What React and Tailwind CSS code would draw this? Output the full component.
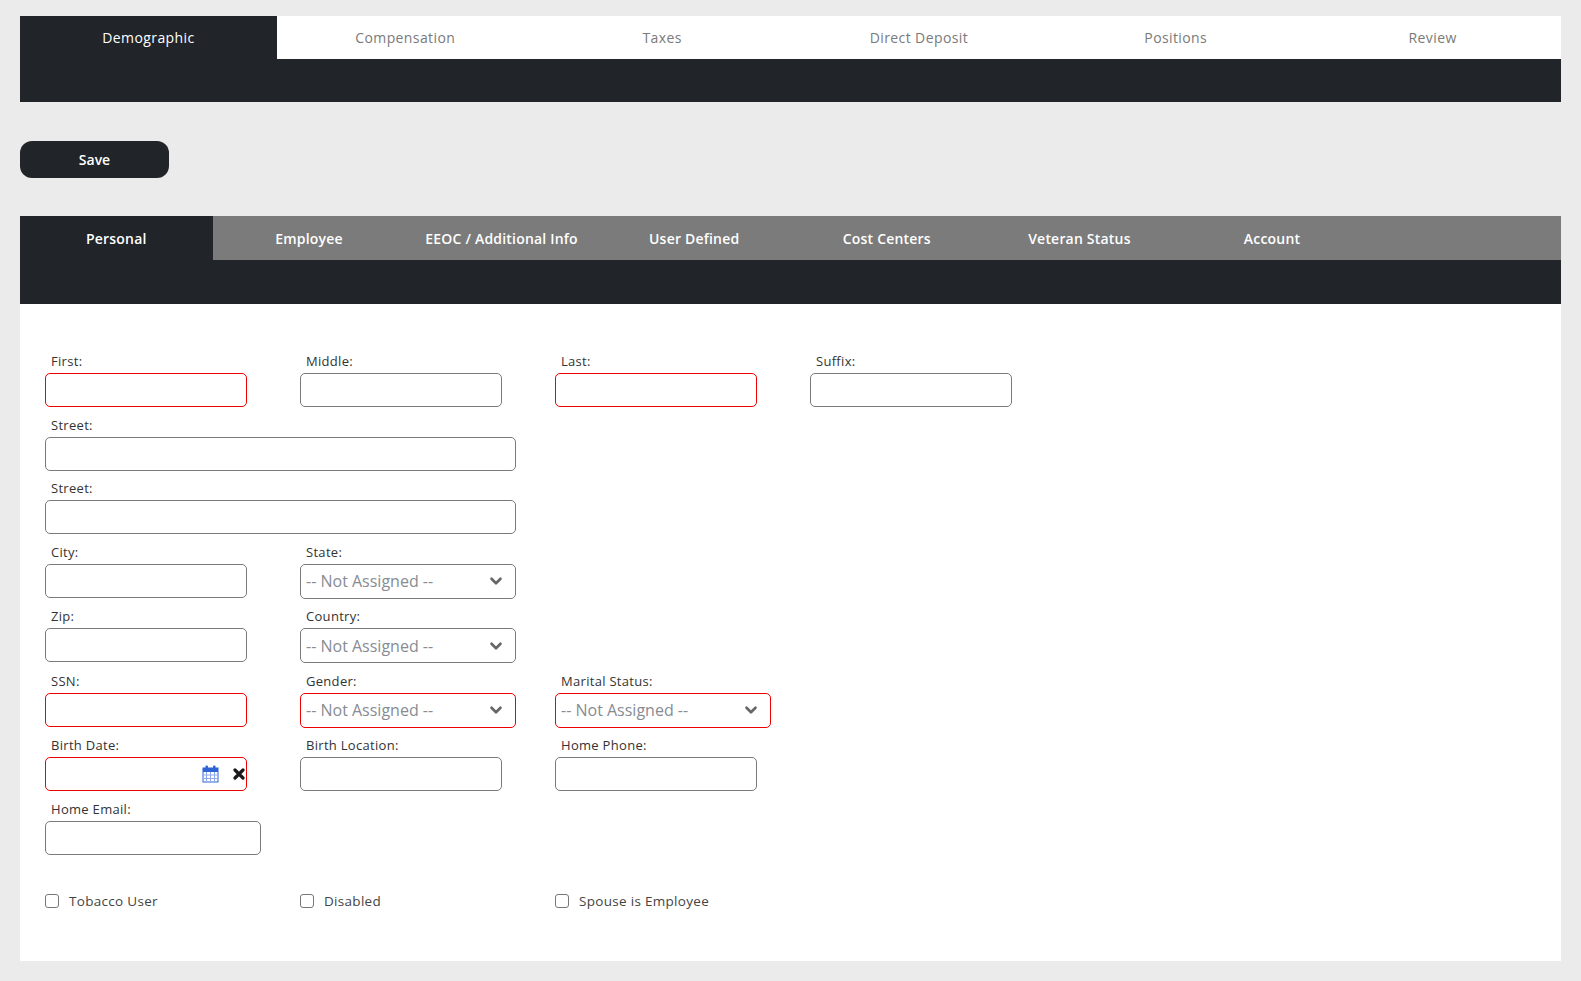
import React from "react";
import { ChevronDown } from "lucide-react";

const topTabs = ["Demographic", "Compensation", "Taxes", "Direct Deposit", "Positions", "Review"];
const subTabs = ["Personal", "Employee", "EEOC / Additional Info", "User Defined", "Cost Centers", "Veteran Status", "Account"];

const font = { fontFamily: '"Open Sans", "Liberation Sans", sans-serif' };

const Field = ({ label, invalid, width = "w-[202px]", children }) => (
	<div className="flex flex-col">
		<label className="h-[20px] leading-[20px] mb-[2px] pl-[6px] text-[13px] tracking-[0.3px] text-[#333]">
			{label}
		</label>
		{children || (
			<input
				className={`${width} h-[34px] rounded-[5px] border bg-white outline-none ${
					invalid ? "border-[#ee0000]" : "border-[#7a7a7a]"
				}`}
			/>
		)}
	</div>
);

const Select = ({ label, invalid }) => (
	<Field label={label}>
		<div
			className={`w-[216px] h-[35px] rounded-[5px] border bg-white flex items-center justify-between pl-[5px] pr-[10px] ${
				invalid ? "border-[#ee0000]" : "border-[#7a7a7a]"
			}`}>
			<span className="text-[16px] text-[#878c93]">-- Not Assigned --</span>
			<ChevronDown size={18} strokeWidth={3.5} className="text-[#666]" />
		</div>
	</Field>
);

const CalendarIcon = () => (
	<svg width="17" height="18" viewBox="0 0 17 18">
		<rect x="1" y="3" width="15" height="14" fill="#fff" stroke="#2f63d6" strokeWidth="1" />
		<rect x="1" y="3" width="15" height="4" fill="#2f63d6" />
		<rect x="3.5" y="0.5" width="2.5" height="5" rx="1" fill="#2f63d6" />
		<rect x="11" y="0.5" width="2.5" height="5" rx="1" fill="#2f63d6" />
		<path d="M4.5 7v10M8.5 7v10M12.5 7v10M1 10h15M1 13.5h15" stroke="#8fa8f0" strokeWidth="1" />
	</svg>
);

const Check = ({ label }) => (
	<label className="flex items-center gap-[10px] text-[13.5px] tracking-[0.3px] text-[#444]">
		<span className="w-[14px] h-[14px] rounded-[3px] border border-[#777] bg-white" />
		{label}
	</label>
);

export default function App() {
	return (
		<div className="min-h-screen bg-[#ebebeb] px-[20px] pt-[16px] pb-[23px]" style={font}>
			<nav className="h-[86px] bg-[#212429]">
				<div className="grid grid-cols-6 h-[43px] bg-white">
					{topTabs.map((t, i) => (
						<div
							key={t}
							className={`flex items-center justify-center text-[14px] tracking-[0.4px] ${
								i === 0 ? "bg-[#212429] text-white font-medium" : "text-[#7a7a7a]"
							}`}>
							{t}
						</div>
					))}
				</div>
			</nav>

			<div className="pt-[39px] pb-[38px]">
				<button className="w-[149px] h-[37px] rounded-[12px] bg-[#212429] text-white text-[14px] font-semibold">
					Save
				</button>
			</div>

			<div className="h-[88px] bg-[#212429]">
				<div className="grid grid-cols-8 h-[44px] bg-[#7b7b7b]">
					{subTabs.map((t, i) => (
						<div
							key={t}
							className={`flex items-center justify-center text-[14px] font-semibold tracking-[0.2px] text-white ${
								i === 0 ? "bg-[#212429]" : ""
							}`}>
							{t}
						</div>
					))}
				</div>
			</div>

			<div className="bg-white pl-[25px] pt-[47px] pb-[50px]">
				<div className="flex flex-col gap-y-[7.5px]">
					<div className="grid grid-cols-[255px_255px_255px_255px]">
						<Field label="First:" invalid />
						<Field label="Middle:" />
						<Field label="Last:" invalid />
						<Field label="Suffix:" />
					</div>
					<div className="flex">
						<Field label="Street:" width="w-[471px]" />
					</div>
					<div className="flex">
						<Field label="Street:" width="w-[471px]" />
					</div>
					<div className="grid grid-cols-[255px_255px_255px_255px]">
						<Field label="City:" />
						<Select label="State:" />
					</div>
					<div className="grid grid-cols-[255px_255px_255px_255px]">
						<Field label="Zip:" />
						<Select label="Country:" />
					</div>
					<div className="grid grid-cols-[255px_255px_255px_255px]">
						<Field label="SSN:" invalid />
						<Select label="Gender:" invalid />
						<Select label="Marital Status:" invalid />
					</div>
					<div className="grid grid-cols-[255px_255px_255px_255px]">
						<Field label="Birth Date:">
							<div className="relative w-[202px] h-[34px] rounded-[5px] border border-[#ee0000] bg-white">
								<span className="absolute right-[27px] top-[7px]">
									<CalendarIcon />
								</span>
								<svg
									className="absolute right-[1px] top-[10px]"
									width="12"
									height="12"
									viewBox="0 0 12 12">
									<path d="M2 2l8 8M10 2l-8 8" stroke="#1a1a1a" strokeWidth="3.2" strokeLinecap="round" />
								</svg>
							</div>
						</Field>
						<Field label="Birth Location:" />
						<Field label="Home Phone:" />
					</div>
					<div className="flex">
						<Field label="Home Email:" width="w-[216px]" />
					</div>
				</div>

				<div className="grid grid-cols-[255px_255px_255px_255px] mt-[36px]">
					<Check label="Tobacco User" />
					<Check label="Disabled" />
					<Check label="Spouse is Employee" />
				</div>
			</div>
		</div>
	);
}
